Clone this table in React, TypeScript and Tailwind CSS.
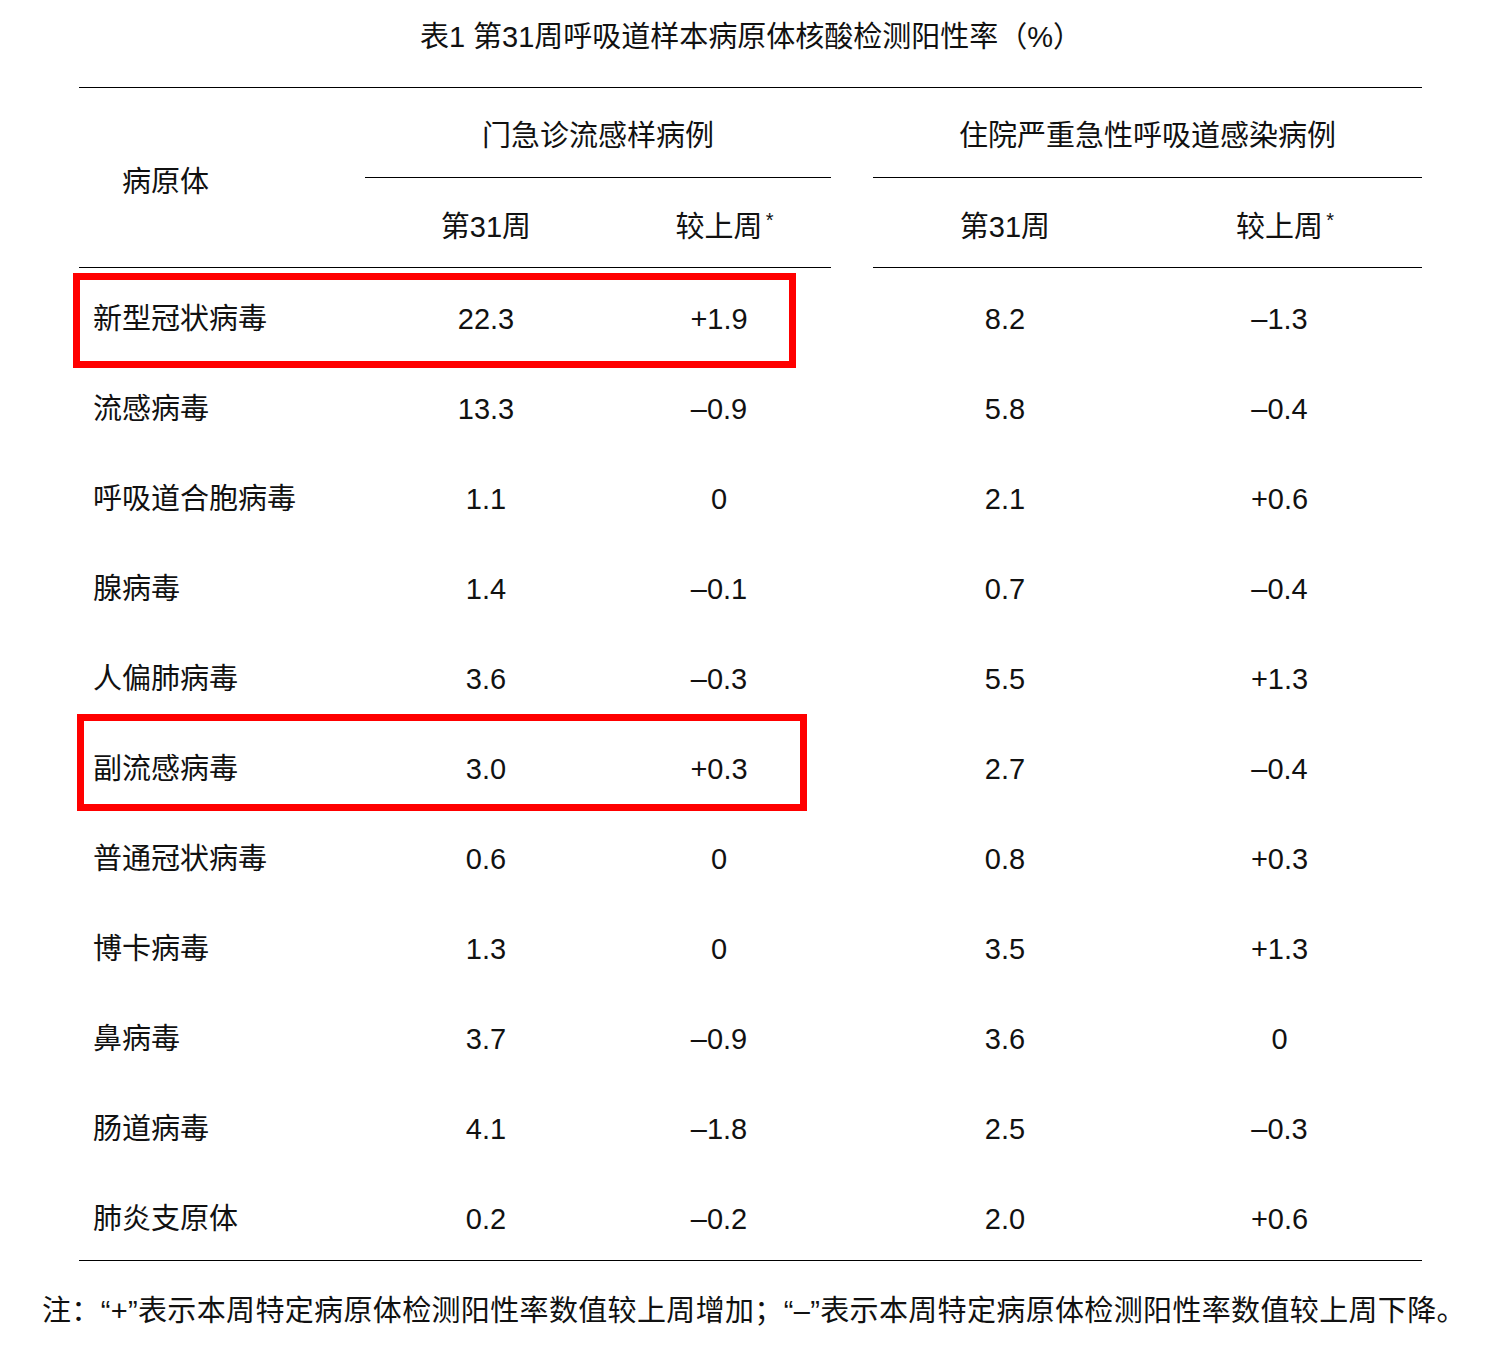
const font = { fontFamily: '"Liberation Sans", "Noto Sans CJK SC", sans-serif' };

type Row = {
  name: string;
  a: string;
  b: string;
  c: string;
  d: string;
};

const rows: Row[] = [
  { name: "新型冠状病毒", a: "22.3", b: "+1.9", c: "8.2", d: "–1.3" },
  { name: "流感病毒", a: "13.3", b: "–0.9", c: "5.8", d: "–0.4" },
  { name: "呼吸道合胞病毒", a: "1.1", b: "0", c: "2.1", d: "+0.6" },
  { name: "腺病毒", a: "1.4", b: "–0.1", c: "0.7", d: "–0.4" },
  { name: "人偏肺病毒", a: "3.6", b: "–0.3", c: "5.5", d: "+1.3" },
  { name: "副流感病毒", a: "3.0", b: "+0.3", c: "2.7", d: "–0.4" },
  { name: "普通冠状病毒", a: "0.6", b: "0", c: "0.8", d: "+0.3" },
  { name: "博卡病毒", a: "1.3", b: "0", c: "3.5", d: "+1.3" },
  { name: "鼻病毒", a: "3.7", b: "–0.9", c: "3.6", d: "0" },
  { name: "肠道病毒", a: "4.1", b: "–1.8", c: "2.5", d: "–0.3" },
  { name: "肺炎支原体", a: "0.2", b: "–0.2", c: "2.0", d: "+0.6" },
];

function Week() {
  return <span>第31周</span>;
}

function Prev() {
  return (
    <span className="relative">
      较上周
      <span className="absolute -right-[11px] -top-[6px] text-[20px]">*</span>
    </span>
  );
}

export default function App() {
  return (
    <div className="w-[1494px] min-h-[1354px] bg-white text-[#111] pt-[18px]" style={font}>
      <h1 className="text-center text-[29px] leading-[38px] pl-[8px]">
        表1 第31周呼吸道样本病原体核酸检测阳性率（%）
      </h1>

      <div className="ml-[79px] w-[1343px] mt-[31px] border-t-[1.5px] border-black">
        {/* header */}
        <div className="flex text-[29px]">
          <div className="flex w-[752px] border-b-[1.5px] border-black">
            <div className="w-[286px] flex items-center pl-[43px] pt-[11px]">病原体</div>
            <div className="w-[466px] flex flex-col">
              <div className="h-[90px] pt-[8px] flex items-center justify-center border-b-[1.5px] border-black">
                门急诊流感样病例
              </div>
              <div className="h-[89px] pt-[11px] flex items-center">
                <div className="w-[242px] text-center"><Week /></div>
                <div className="w-[224px] text-center"><Prev /></div>
              </div>
            </div>
          </div>
          <div className="w-[42px]" />
          <div className="w-[549px] flex flex-col border-b-[1.5px] border-black">
            <div className="h-[90px] pt-[8px] flex items-center justify-center border-b-[1.5px] border-black">
              住院严重急性呼吸道感染病例
            </div>
            <div className="h-[89px] pt-[11px] flex items-center">
              <div className="w-[264px] text-center"><Week /></div>
              <div className="w-[285px] text-center"><Prev /></div>
            </div>
          </div>
        </div>

        {/* body */}
        <div className="pt-[7px] text-[29px]">
          {rows.map((r, i) => (
            <div
              key={r.name}
              className="relative grid grid-cols-[286px_242px_224px_42px_264px_285px] h-[90px] items-center"
            >
              <div className="pl-[14px]">{r.name}</div>
              <div className="text-center">{r.a}</div>
              <div className="text-center">{r.b}</div>
              <div />
              <div className="text-center">{r.c}</div>
              <div className="text-center">{r.d}</div>
              {i === 0 && (
                <div className="absolute left-[-6px] top-[-2px] w-[723px] h-[95px] border-[7px] border-[#ff0000]" />
              )}
              {i === 5 && (
                <div className="absolute left-[-2px] top-[-11px] w-[730px] h-[97px] border-[7px] border-[#ff0000]" />
              )}
            </div>
          ))}
        </div>
        <div className="-mt-[5px] border-t-[1.5px] border-black" />
      </div>

      <p className="mt-[30px] pl-[42px] text-[29px] leading-[40px] tracking-[0.35px] whitespace-nowrap">
        注：“+”表示本周特定病原体检测阳性率数值较上周增加；“–”表示本周特定病原体检测阳性率数值较上周下降。
      </p>
    </div>
  );
}
